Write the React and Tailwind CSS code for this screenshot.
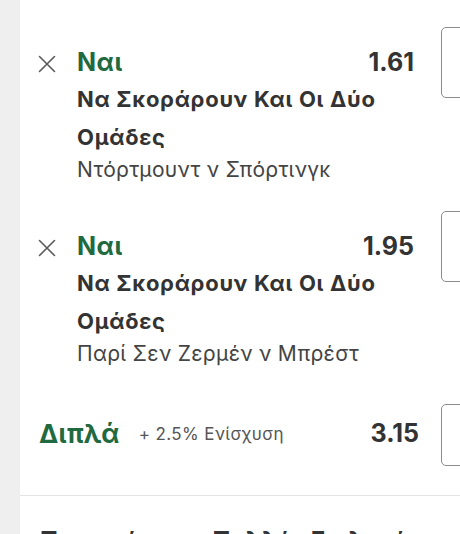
import React from 'react';

const GREEN = 'text-[#21693f]';

const CloseIcon = () => (
  <svg width="18" height="18" viewBox="0 0 18 18" className="text-[#5a5a5a]">
    <path d="M1.5 1.5 L16.5 16.5 M16.5 1.5 L1.5 16.5" stroke="currentColor" strokeWidth="1.6" strokeLinecap="round" fill="none" />
  </svg>
);

const StakeBox = ({ h = 'h-[71px]' }) => (
  <div className={`${h} w-[60px] shrink-0 rounded-[5px] border border-[#8c8c8c] bg-white`} />
);

const Selection = ({ pick, market, event, odds }) => (
  <div className="pt-[27px]">
    <div className="flex items-center">
      <div className="w-[57px] shrink-0 pl-[18px] pt-[2px]">
        <CloseIcon />
      </div>
      <span className={`flex-1 text-[25px] tracking-[0.5px] font-bold ${GREEN}`}>{pick}</span>
      <span className="text-[25px] font-bold text-[#333]">{odds}</span>
      <div className="ml-[27px]">
        <StakeBox />
      </div>
    </div>
    <div className="-mt-[18px] pl-[57px] pr-[80px]">
      <div className="text-[22px] leading-[38px] tracking-[0.7px] font-bold text-[#333]">{market}</div>
      <div className="text-[21px] leading-[28px] tracking-[0.3px] text-[#444]">{event}</div>
    </div>
  </div>
);

export default function App() {
  const bets = [
    { pick: 'Ναι', market: 'Να Σκοράρουν Και Οι Δύο Ομάδες', event: 'Ντόρτμουντ ν Σπόρτινγκ', odds: '1.61' },
    { pick: 'Ναι', market: 'Να Σκοράρουν Και Οι Δύο Ομάδες', event: 'Παρί Σεν Ζερμέν ν Μπρέστ', odds: '1.95' },
  ];

  return (
    <div className="flex h-[534px] w-[460px] overflow-hidden bg-[#efefef]" style={{ fontFamily: 'Inter, "Noto Sans", sans-serif' }}>
      <div className="ml-[20px] w-[481px] shrink-0 bg-white">
        {bets.map((b, i) => (
          <Selection key={i} {...b} />
        ))}

        <div className="flex items-center pl-[19px] pt-[36px] pb-[29px]">
          <span className={`-mt-[4px] text-[26px] tracking-[0.3px] font-bold ${GREEN}`}>Διπλά</span>
          <span className="ml-[19px] text-[17px] tracking-[0.4px] text-[#555]">+ 2.5% Ενίσχυση</span>
          <span className="ml-auto mr-[22px] -mt-[2px] text-[25px] font-bold text-[#333]">3.15</span>
          <StakeBox h="h-[62px]" />
        </div>

        <div className="border-t border-[#e3e3e3] pl-[20px] pt-[29px] text-[24px] leading-[32px] font-bold whitespace-nowrap text-[#333]">
          Περισσότερες Πολλές Επιλογές
        </div>
      </div>
    </div>
  );
}
